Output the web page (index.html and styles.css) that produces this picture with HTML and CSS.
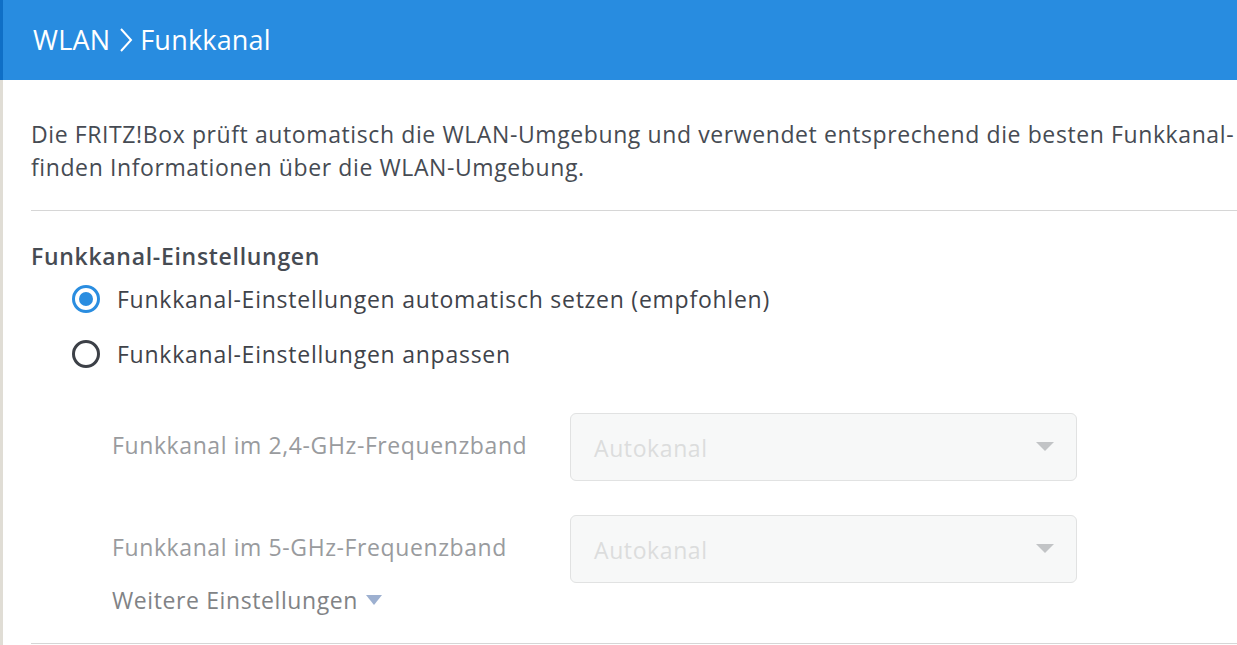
FILE: index.html
```html
<!DOCTYPE html>
<html lang="de">
<head>
<meta charset="utf-8">
<link rel="stylesheet" href="styles.css">
</head>
<body>
<div class="page">
  <header class="topbar">
    <span class="crumb">WLAN</span>
    <svg class="crumb-sep" width="16" height="26" viewBox="0 0 16 26"><path d="M3 2 L13 13 L3 24" fill="none" stroke="#fff" stroke-width="2"/></svg>
    <span class="crumb">Funkkanal</span>
  </header>
  <main class="content">
    <p class="intro">Die FRITZ!Box prüft automatisch die WLAN-Umgebung und verwendet entsprechend die besten Funkkanal-<br>finden Informationen über die WLAN-Umgebung.</p>
    <hr class="rule">
    <section class="settings">
      <h2 class="section-title">Funkkanal-Einstellungen</h2>
      <label class="radio-row">
        <span class="radio checked"></span>
        <span>Funkkanal-Einstellungen automatisch setzen (empfohlen)</span>
      </label>
      <label class="radio-row">
        <span class="radio"></span>
        <span>Funkkanal-Einstellungen anpassen</span>
      </label>
      <div class="fields">
        <div class="field">
          <span class="field-label">Funkkanal im 2,4-GHz-Frequenzband</span>
          <div class="select"><span>Autokanal</span><span class="select-arrow"></span></div>
        </div>
        <div class="field">
          <span class="field-label">Funkkanal im 5-GHz-Frequenzband</span>
          <div class="select"><span>Autokanal</span><span class="select-arrow"></span></div>
        </div>
        <div class="more">Weitere Einstellungen <span class="more-arrow"></span></div>
      </div>
    </section>
    <hr class="rule">
  </main>
</div>
</body>
</html>
```
FILE: styles.css
```css
html, body {
  margin: 0;
  padding: 0;
  background: #fff;
  overflow: hidden;
}
body {
  font-family: "Open Sans", "Lato", sans-serif;
  color: #464b53;
  width: 1237px;
  height: 645px;
  font-size: 23px;
  letter-spacing: 0.6px;
}
.page {
  border-left: 3px solid #e0ddd5;
  height: 645px;
  box-sizing: border-box;
}
.topbar {
  height: 80px;
  background: #288ce0;
  margin-left: -3px;
  border-left: 3px solid #0f6fc6;
  display: flex;
  align-items: center;
  padding-left: 30px;
  gap: 4px;
  color: #fff;
  font-size: 27px;
  letter-spacing: 0.2px;
  line-height: 32px;
}
.crumb-sep {
  margin: 0 2px 0 4px;
}
.content {
  padding-left: 28px;
}
.intro {
  margin: 0;
  padding-top: 38px;
  line-height: 33px;
  white-space: nowrap;
}
.rule {
  border: none;
  border-top: 1px solid #d6d6d6;
  margin: 0;
}
.intro + .rule {
  margin-top: 26px;
}
.section-title {
  margin: 0;
  padding-top: 30px;
  font-size: 23px;
  font-weight: 600;
  line-height: 30px;
  letter-spacing: 0.7px;
}
.radio-row {
  display: flex;
  align-items: center;
  gap: 17px;
  padding-left: 41px;
  height: 55px;
  color: #3f434a;
  white-space: nowrap;
  letter-spacing: 0.75px;
}
.radio {
  width: 28px;
  height: 28px;
  box-sizing: border-box;
  border: 3px solid #3c4047;
  border-radius: 50%;
  position: relative;
  flex: none;
}
.radio.checked {
  border-color: #2a8de0;
}
.radio.checked::after {
  content: "";
  position: absolute;
  left: 4px;
  top: 4px;
  width: 14px;
  height: 14px;
  border-radius: 50%;
  background: #2a8de0;
}
.fields {
  padding-left: 81px;
  padding-top: 32px;
  padding-bottom: 27px;
}
.field {
  display: flex;
  align-items: center;
  height: 68px;
  margin-bottom: 34px;
}
.field:nth-child(2) {
  margin-bottom: 0;
}
.field-label {
  width: 458px;
  color: #999b9e;
  margin-top: -4px;
  white-space: nowrap;
}
.select {
  width: 507px;
  height: 68px;
  box-sizing: border-box;
  border: 1px solid #e1e2e2;
  border-radius: 6px;
  background: #f7f8f8;
  display: flex;
  align-items: center;
  justify-content: space-between;
  padding: 2px 22px 0 23px;
  color: #dcdddd;
}
.select-arrow {
  width: 0;
  height: 0;
  border-left: 9px solid transparent;
  border-right: 9px solid transparent;
  border-top: 9px solid #c2c4c6;
  margin-top: -4px;
}
.more {
  color: #818386;
  display: flex;
  align-items: center;
  gap: 8px;
  margin-top: 1px;
  line-height: 32px;
  white-space: nowrap;
}
.more-arrow {
  width: 0;
  height: 0;
  border-left: 8px solid transparent;
  border-right: 8px solid transparent;
  border-top: 10px solid #9db0d0;
  margin-top: 0;
}
```
